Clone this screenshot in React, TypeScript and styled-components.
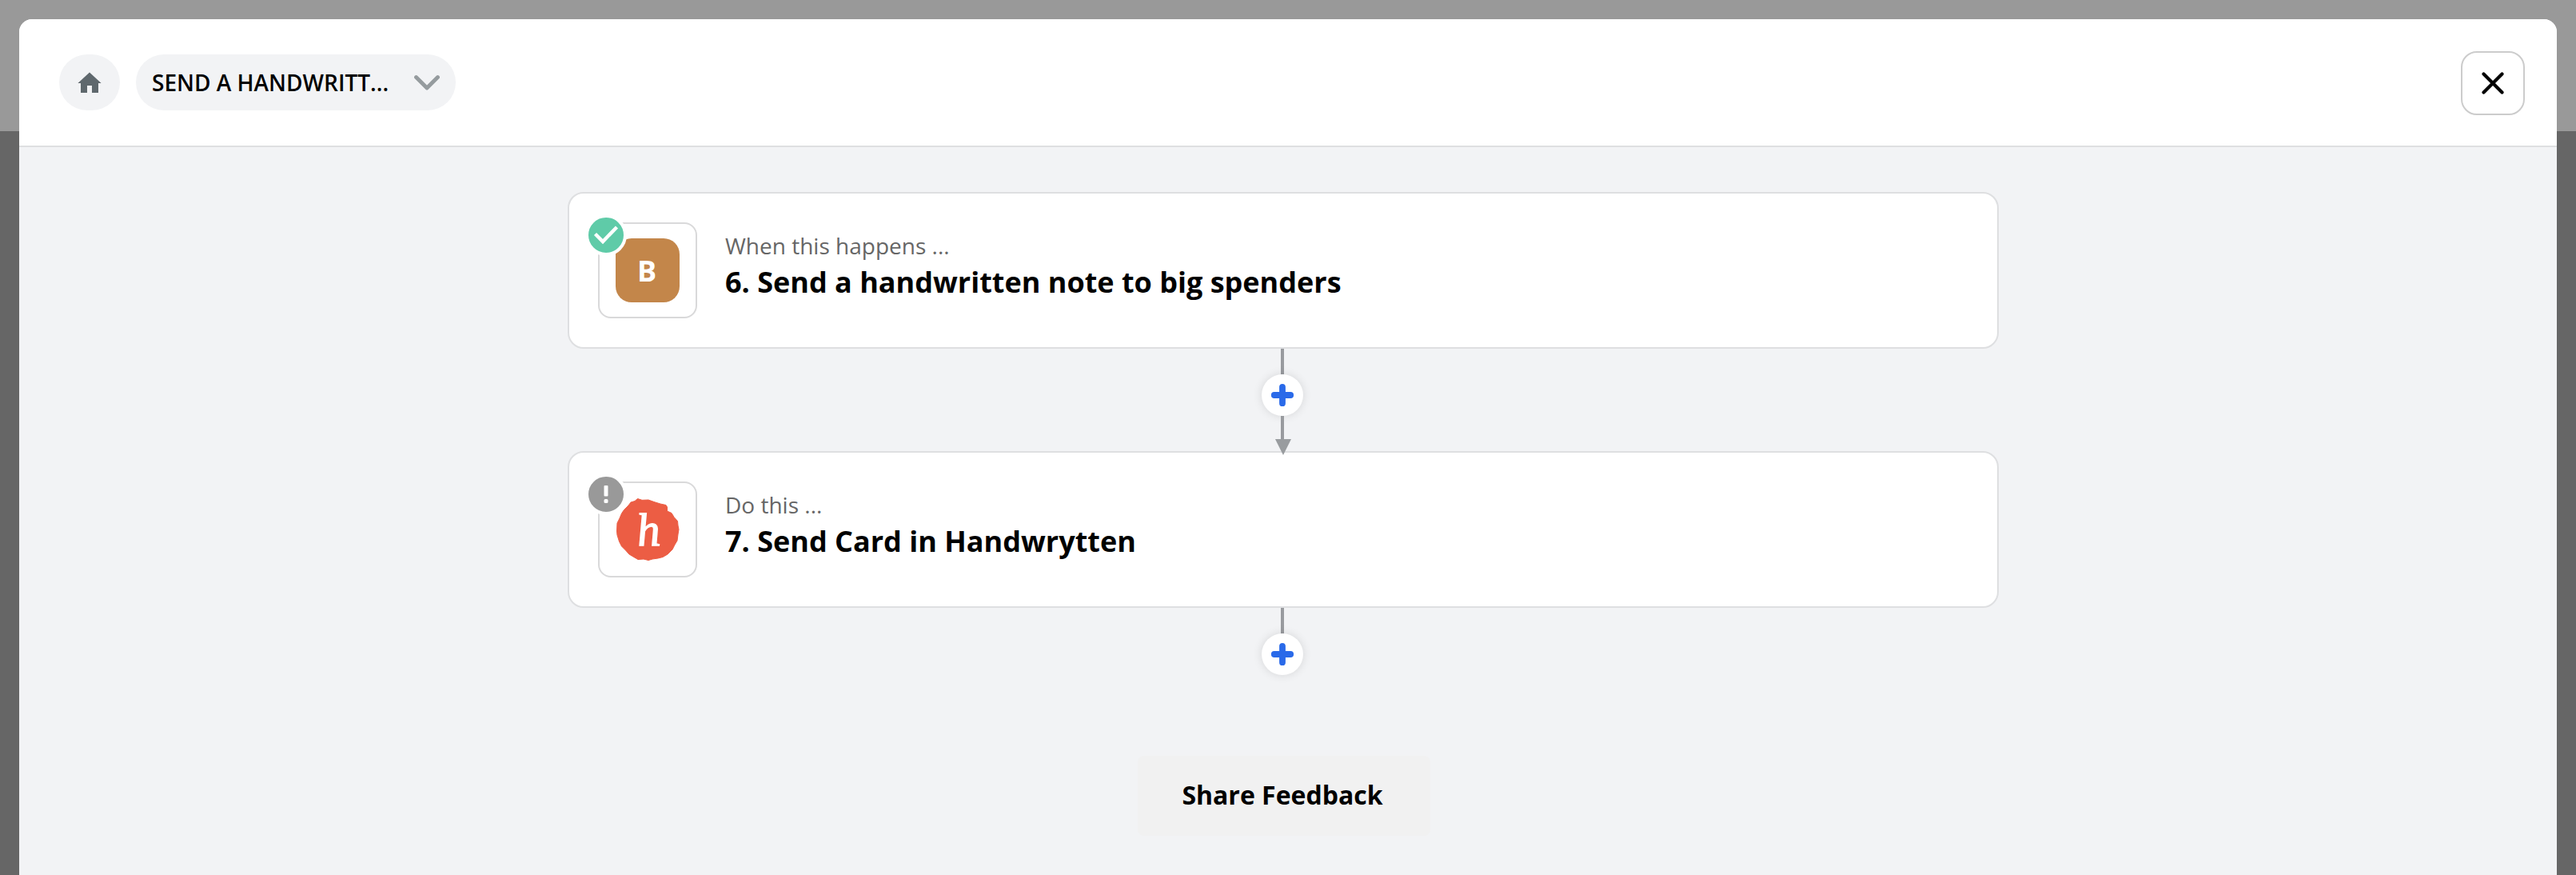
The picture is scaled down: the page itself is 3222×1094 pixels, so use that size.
import React from "react";
import styled, { createGlobalStyle } from "styled-components";

const GlobalStyle = createGlobalStyle`
  *, *::before, *::after { box-sizing: border-box; }
  body {
    margin: 0;
    background: #666;
    font-family: "Open Sans", "Noto Sans", sans-serif;
    color: #000;
  }
  button { font: inherit; color: inherit; border: 0; padding: 0; cursor: pointer; }
`;

const Backdrop = styled.div`
  height: 1094px;
  padding: 24px 24px 0;
  overflow: hidden;
  background: linear-gradient(#999 0 164px, #666 164px);
`;

const Modal = styled.main`
  display: flex;
  flex-direction: column;
  height: 1070px;
  border-radius: 16px 16px 0 0;
  overflow: hidden;
  background: #f2f3f5;
`;

const Header = styled.header`
  flex: none;
  display: flex;
  align-items: center;
  height: 160px;
  padding: 0 40px 0 50px;
  background: #fff;
  border-bottom: 2px solid #dedfe1;
`;

const HomeButton = styled.button`
  display: flex;
  align-items: center;
  justify-content: center;
  width: 76px;
  height: 70px;
  margin-right: 20px;
  border-radius: 35px;
  background: #f2f3f5;
`;

const ZapPicker = styled.button`
  display: flex;
  align-items: center;
  justify-content: space-between;
  width: 400px;
  height: 70px;
  padding: 0 20px;
  border-radius: 35px;
  background: #f2f3f5;
  font-size: 28px;
  font-weight: 600;
  line-height: 38px;
  white-space: nowrap;
`;

const CloseButton = styled.button`
  display: flex;
  align-items: center;
  justify-content: center;
  width: 80px;
  height: 80px;
  margin: 2px 0 0 auto;
  border: 2px solid #ccc;
  border-radius: 20px;
  background: #fff;
`;

const Flow = styled.section`
  display: flex;
  flex-direction: column;
  align-items: center;
  padding: 56px 12px 0 0;
`;

const StepCard = styled.article`
  display: flex;
  align-items: center;
  width: 1790px;
  height: 196px;
  padding-left: 36px;
  border: 2px solid #dedfe1;
  border-radius: 20px;
  background: #fff;
`;

const AppTile = styled.div`
  position: relative;
  display: flex;
  align-items: center;
  justify-content: center;
  width: 124px;
  height: 120px;
  border: 2px solid #d9d9da;
  border-radius: 16px;
`;

const LetterIcon = styled.div`
  width: 80px;
  height: 80px;
  padding-right: 2px;
  border-radius: 20px;
  background: #c3864a;
  color: #fff;
  font-size: 36px;
  font-weight: 700;
  line-height: 81px;
  text-align: center;
`;

const StatusBadge = styled.span<{ $color: string }>`
  position: absolute;
  left: -18px;
  top: -12px;
  display: flex;
  width: 52px;
  height: 52px;
  border: 4px solid #fff;
  border-radius: 50%;
  background: ${(p) => p.$color};
`;

const StepText = styled.div`
  padding: 0 0 11px 35px;
`;

const StepHint = styled.p`
  margin: 0;
  font-size: 28px;
  line-height: 40px;
  color: #666;
`;

const StepTitle = styled.h2`
  margin: 0;
  font-size: 36px;
  font-weight: 700;
  line-height: 51px;
`;

const Connector = styled.div`
  display: flex;
  flex-direction: column;
  align-items: center;
  margin-right: 2px;
`;

const Line = styled.span<{ $length: number }>`
  width: 4px;
  height: ${(p) => p.$length}px;
  background: #999b9f;
`;

const AddButton = styled.button`
  display: flex;
  align-items: center;
  justify-content: center;
  width: 52px;
  height: 52px;
  border-radius: 50%;
  background: #fff;
  box-shadow: 0 0 12px rgba(0, 0, 0, 0.12);
`;

const ArrowHead = styled.span`
  position: relative;
  z-index: 1;
  width: 20px;
  height: 20px;
  margin: 0 0 -5px 2px;
  background: #999c9f;
  clip-path: polygon(0 0, 100% 0, 50% 100%);
`;

const FeedbackButton = styled.button`
  width: 366px;
  height: 100px;
  margin: 101px 0 0 2px;
  padding: 0 4px 4px 0;
  border-radius: 8px;
  background: #f1f1f1;
  font-size: 32px;
  font-weight: 700;
`;

const HomeIcon = () => (
  <svg width="30" height="28" viewBox="0 0 30 28">
    <path d="M15 1.500 29.600 15H26v12h-8v-9h-6v9H4V15H.4z" fill="#5f686d" />
  </svg>
);

const ChevronIcon = () => (
  <svg width="32" height="20" viewBox="0 0 32 20" fill="none" stroke="#959b9e" strokeWidth="4.800" strokeLinecap="round" strokeLinejoin="round">
    <path d="M2.500 3.500 16 17 29.500 3.500" />
  </svg>
);

const CloseIcon = () => (
  <svg width="28" height="28" viewBox="0 0 28 28" stroke="#000" strokeWidth="4.200" strokeLinecap="round">
    <path d="M2.500 2.500l23 23M25.500 2.500l-23 23" />
  </svg>
);

const PlusIcon = () => (
  <svg width="30" height="30" viewBox="0 0 30 30" stroke="#2a6ae9" strokeWidth="7.800" strokeLinecap="round">
    <path d="M15 4.800v20.400M4.800 15h20.400" />
  </svg>
);

const CheckIcon = () => (
  <svg width="44" height="44" viewBox="0 0 44 44" fill="none" stroke="#fff" strokeWidth="4.400">
    <path d="M8.500 20.500 18 30 35.500 12" />
  </svg>
);

const AlertIcon = () => (
  <svg width="44" height="44" viewBox="0 0 44 44" fill="#fff">
    <rect x="19.500" y="11" width="5" height="13.500" rx="1" />
    <rect x="19.500" y="28" width="5" height="5" rx="1.500" />
  </svg>
);

const HandwryttenLogo = () => (
  <svg width="80" height="80" viewBox="0 0 80 80">
    <path
      d="M27.500 1.500 33 3.300 41 3 48 5.500 56 8 63 9.500 64.500 12 64.500 17 70 19.500 73 24.500 77.500 29.500 78 35 79 40 78 46 77 54 74 59 71 65 65 71 59 74.500 53 76 46 77 41 78.500 35 77 28 77.500 22 74 17 71 12.500 66 7.500 61 4.500 55 2 47 1.500 42 2 32 5 26 7.500 20 10.500 15.500 16 10 19 6 24 4.500z"
      fill="#ec5d44" stroke="#ec5d44" strokeWidth="1" strokeLinejoin="round"
    />
    <text
      transform="translate(28 60) skewX(5)"
      fill="#fff"
      stroke="#fff"
      strokeWidth="1.400"
      fontFamily="Liberation Serif, serif"
      fontStyle="italic"
      fontSize="58"
    >
      h
    </text>
  </svg>
);

export default function App() {
  return (
    <>
      <GlobalStyle />
      <Backdrop>
        <Modal>
          <Header>
            <HomeButton aria-label="Home"><HomeIcon /></HomeButton>
            <ZapPicker>
              <span>SEND A HANDWRITT...</span>
              <ChevronIcon />
            </ZapPicker>
            <CloseButton aria-label="Close"><CloseIcon /></CloseButton>
          </Header>
          <Flow>
            <StepCard>
              <AppTile>
                <LetterIcon>B</LetterIcon>
                <StatusBadge $color="#5fcba8"><CheckIcon /></StatusBadge>
              </AppTile>
              <StepText>
                <StepHint>When this happens ...</StepHint>
                <StepTitle>6. Send a handwritten note to big spenders</StepTitle>
              </StepText>
            </StepCard>
            <Connector>
              <Line $length={32} />
              <AddButton aria-label="Add step"><PlusIcon /></AddButton>
              <Line $length={29} />
              <ArrowHead />
            </Connector>
            <StepCard>
              <AppTile>
                <HandwryttenLogo />
                <StatusBadge $color="#999"><AlertIcon /></StatusBadge>
              </AppTile>
              <StepText>
                <StepHint>Do this ...</StepHint>
                <StepTitle>7. Send Card in Handwrytten</StepTitle>
              </StepText>
            </StepCard>
            <Connector>
              <Line $length={32} />
              <AddButton aria-label="Add step"><PlusIcon /></AddButton>
            </Connector>
            <FeedbackButton>Share Feedback</FeedbackButton>
          </Flow>
        </Modal>
      </Backdrop>
    </>
  );
}
